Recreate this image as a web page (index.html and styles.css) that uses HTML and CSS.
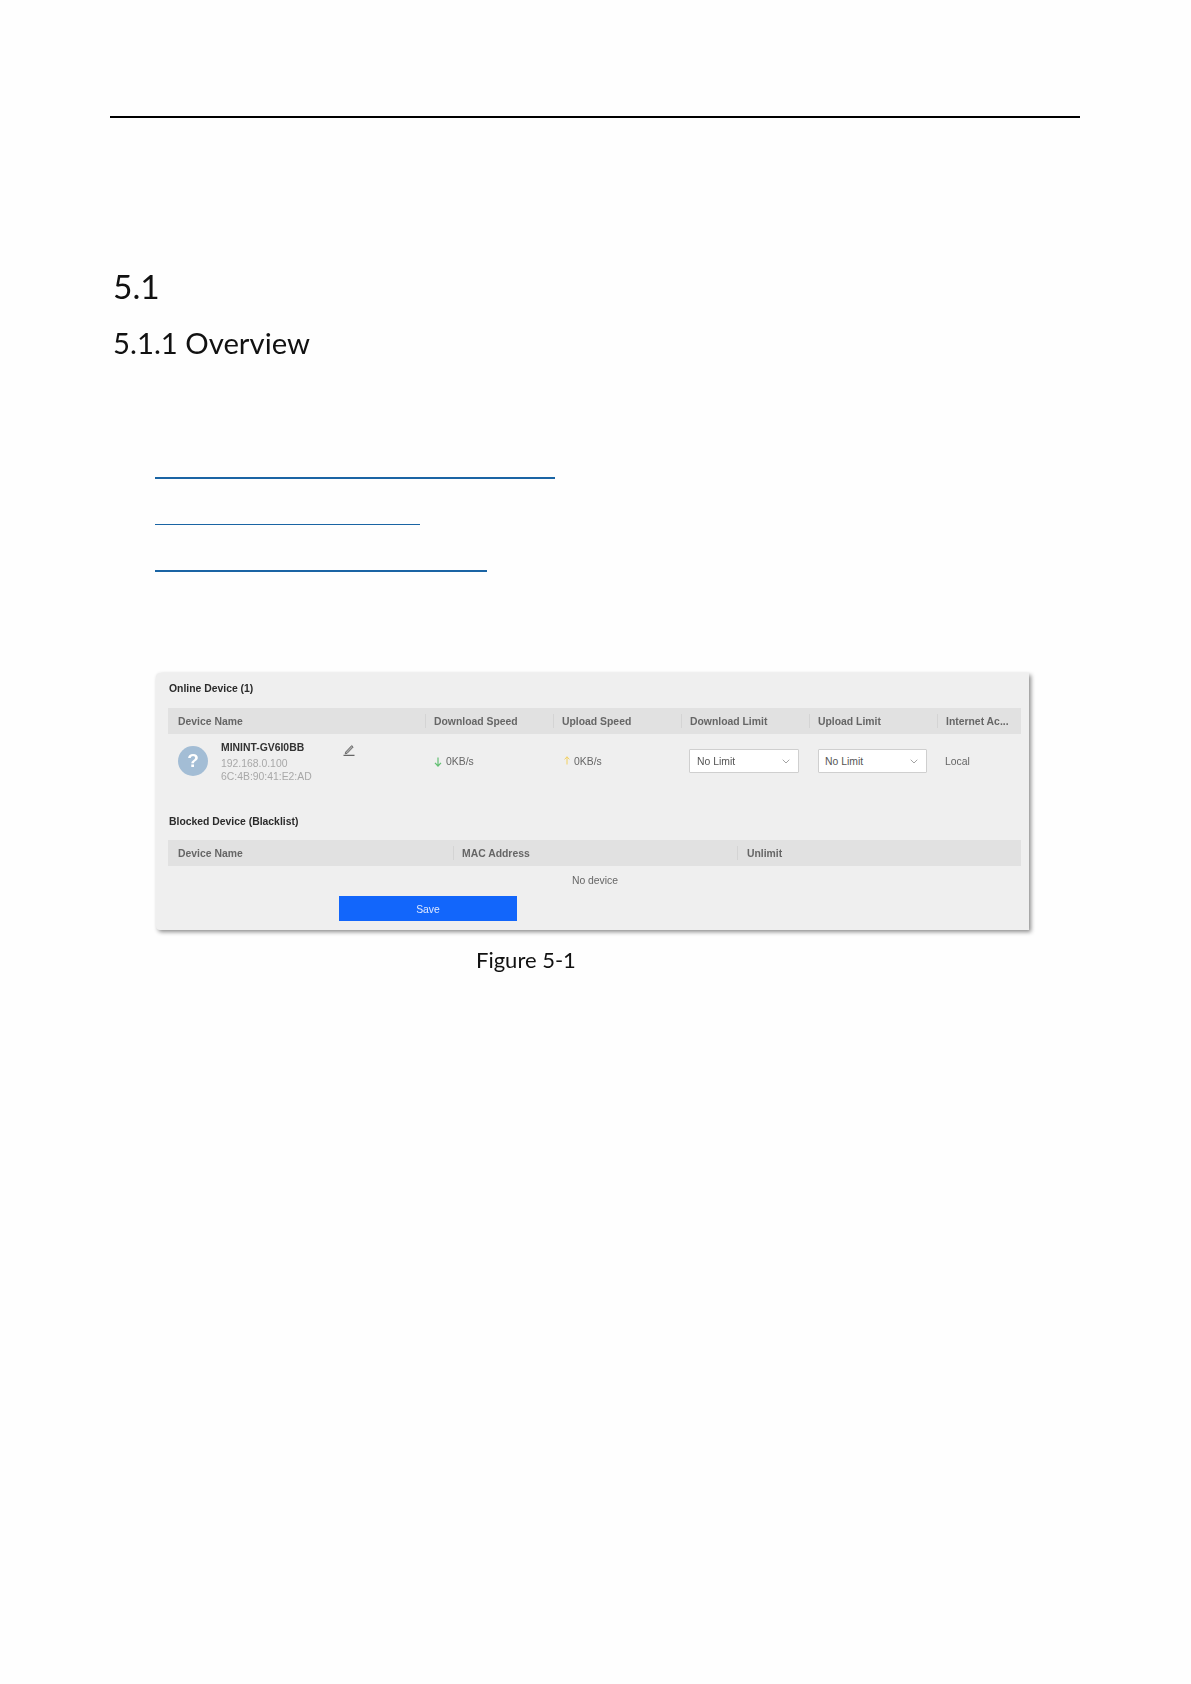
FILE: index.html
```html
<!DOCTYPE html>
<html lang="en">
<head>
<meta charset="utf-8">
<title>5.1.1 Overview</title>
<link rel="stylesheet" href="styles.css">
</head>
<body>
<main class="page">
  <hr class="rule">
  <h1 class="chapter">5.1</h1>
  <h2 class="section">5.1.1 Overview</h2>
  <ul class="links">
    <li class="link-bar link-long"></li>
    <li class="link-bar link-short"></li>
    <li class="link-bar link-mid"></li>
  </ul>
  <section class="card">
    <h3 class="card-title">Online Device (1)</h3>
    <div class="thead cols-online">
      <div class="th">Device Name</div>
      <div class="th sep">Download Speed</div>
      <div class="th sep">Upload Speed</div>
      <div class="th sep">Download Limit</div>
      <div class="th sep">Upload Limit</div>
      <div class="th sep">Internet Ac...</div>
    </div>
    <div class="row cols-online">
      <div class="device">
        <div class="avatar">?</div>
        <div class="device-info">
          <div class="device-name">MININT-GV6I0BB</div>
          <div class="device-meta">192.168.0.100</div>
          <div class="device-meta">6C:4B:90:41:E2:AD</div>
        </div>
        <svg class="pencil" width="12" height="12" viewBox="0 0 12 12" aria-hidden="true"><path d="M2.6 8.1 8.7 1.6 10.2 3 4.2 9.3 2.2 9.8Z" fill="#aaa" stroke="#555" stroke-width=".8"/><path d="M.5 11.3H11.5" stroke="#444" stroke-width="1"/></svg>
      </div>
      <div class="speed speed-down">
        <svg width="8" height="10" viewBox="0 0 8 10" aria-hidden="true"><path d="M4 .5V9M1 5.8 4 9 7 5.8" fill="none" stroke="#62bf72" stroke-width="1.2"/></svg>
        <span>0KB/s</span>
      </div>
      <div class="speed speed-up">
        <svg width="6" height="9" viewBox="0 0 6 9" aria-hidden="true"><path d="M3 8.5V.8M.6 3.4 3 .8 5.4 3.4" fill="none" stroke="#f2d060" stroke-width="1"/></svg>
        <span>0KB/s</span>
      </div>
      <div class="select-cell">
        <div class="select"><span>No Limit</span><svg width="8" height="5" viewBox="0 0 8 5" aria-hidden="true"><path d="M.7.7 4 4 7.3.7" fill="none" stroke="#999" stroke-width=".9"/></svg></div>
      </div>
      <div class="select-cell">
        <div class="select select-b"><span>No Limit</span><svg width="8" height="5" viewBox="0 0 8 5" aria-hidden="true"><path d="M.7.7 4 4 7.3.7" fill="none" stroke="#999" stroke-width=".9"/></svg></div>
      </div>
      <div class="access">Local</div>
    </div>
    <h3 class="card-title blocked">Blocked Device (Blacklist)</h3>
    <div class="thead cols-blocked">
      <div class="th">Device Name</div>
      <div class="th sep">MAC Address</div>
      <div class="th sep">Unlimit</div>
    </div>
    <div class="empty">No device</div>
    <button class="save" type="button">Save</button>
  </section>
  <p class="caption">Figure 5-1</p>
</main>
</body>
</html>
```

FILE: styles.css
```css
* { box-sizing: border-box; }
html, body { margin: 0; padding: 0; background: #fefefe; }
.page {
  width: 1191px;
  height: 1684px;
  padding: 116px 111px 0 110px;
  font-family: "Liberation Sans", Arial, sans-serif;
  color: #000;
}
.rule { margin: 0; border: 0; height: 2px; background: #000; }
.chapter, .section {
  margin: 0;
  padding-left: 3px;
  font-family: Lato, "Open Sans", sans-serif;
  font-weight: 400;
  line-height: 40px;
  color: #111;
  filter: blur(.3px);
}
.chapter { margin-top: 148px; font-size: 33.5px; }
.section { margin-top: 17px; font-size: 29.3px; }
.links {
  list-style: none;
  margin: 114px 0 0 45px;
  padding: 0;
  display: flex;
  flex-direction: column;
  gap: 45px;
}
.link-bar { background: #1a64a4; height: 2px; }
.link-long { width: 400px; }
.link-short { width: 265px; height: 1px; }
.link-mid { width: 332px; }
.card {
  width: 873px;
  height: 257px;
  margin: 101px 0 0 46px;
  padding: 7px 8px 9px 12px;
  background: #efefef;
  border-radius: 4px 0 0 4px;
  box-shadow: 2px 2px 4px rgba(0, 0, 0, .45);
  font-size: 10.4px;
  color: #555;
  filter: blur(.5px);
}
.card-title {
  height: 16px;
  margin: 0;
  padding-left: 1px;
  font-size: 10.4px;
  font-weight: 700;
  line-height: 18px;
  color: #2b2b2b;
}
.blocked { margin-top: 25px; }
.thead {
  display: grid;
  align-items: center;
  height: 26px;
  margin-top: 12px;
  background: #e1e1e1;
}
.blocked + .thead { margin-top: 11px; }
.cols-online { grid-template-columns: 257px 128px 128px 128px 128px 84px; }
.cols-blocked { grid-template-columns: 285px 284px 284px; }
.th {
  padding-top: 2px;
  padding-left: 10px;
  font-weight: 700;
  line-height: 12px;
  color: #666;
  white-space: nowrap;
}
.sep { padding-left: 8px; border-left: 1px solid #d4d4d4; }
.cols-blocked .sep:last-child { padding-left: 9px; }
.row { display: grid; align-items: center; height: 54px; }
.device { display: flex; align-items: center; padding-left: 10px; position: relative; }
.avatar {
  width: 30px;
  height: 30px;
  border-radius: 50%;
  background: #a3bdd5;
  color: #fff;
  font-size: 19px;
  font-weight: 700;
  line-height: 30px;
  text-align: center;
}
.device-info { margin-left: 13px; margin-top: 3px; }
.device-name { font-weight: 700; color: #333; line-height: 15px; margin-bottom: 2px; margin-top: -2px; }
.device-meta { color: #a8a8a8; line-height: 13px; }
.pencil { position: absolute; left: 175px; top: 5px; }
.speed { display: flex; align-items: center; padding-left: 10px; color: #666; }
.speed-down svg { margin-left: -1px; margin-right: 4px; margin-top: 2px; }
.speed-up svg { margin-left: 1px; margin-right: 4px; margin-top: -1px; }
.select-cell { padding-left: 8px; }
.select {
  display: flex;
  align-items: center;
  justify-content: space-between;
  width: 110px;
  height: 24px;
  padding: 1px 8px 0 7px;
  background: #fff;
  border: 1px solid #cfcfcf;
  color: #555;
  border-radius: 1px;
}
.select-b { width: 109px; margin-left: 1px; padding-left: 6px; }
.access { padding-left: 8px; color: #666; }
.empty {
  height: 30px;
  padding-left: 1px;
  line-height: 30px;
  text-align: center;
  color: #666;
}
.save {
  display: block;
  width: 178px;
  height: 25px;
  margin: 0 0 0 171px;
  padding: 1px 0 0;
  border: 0;
  background: #1266fb;
  color: #dfe9ff;
  font: 10.4px "Liberation Sans", Arial, sans-serif;
}
.caption {
  margin: 15px 0 0 366px;
  font-family: Lato, "Open Sans", sans-serif;
  font-size: 22px;
  line-height: 30px;
  color: #111;
  filter: blur(.3px);
}
```
